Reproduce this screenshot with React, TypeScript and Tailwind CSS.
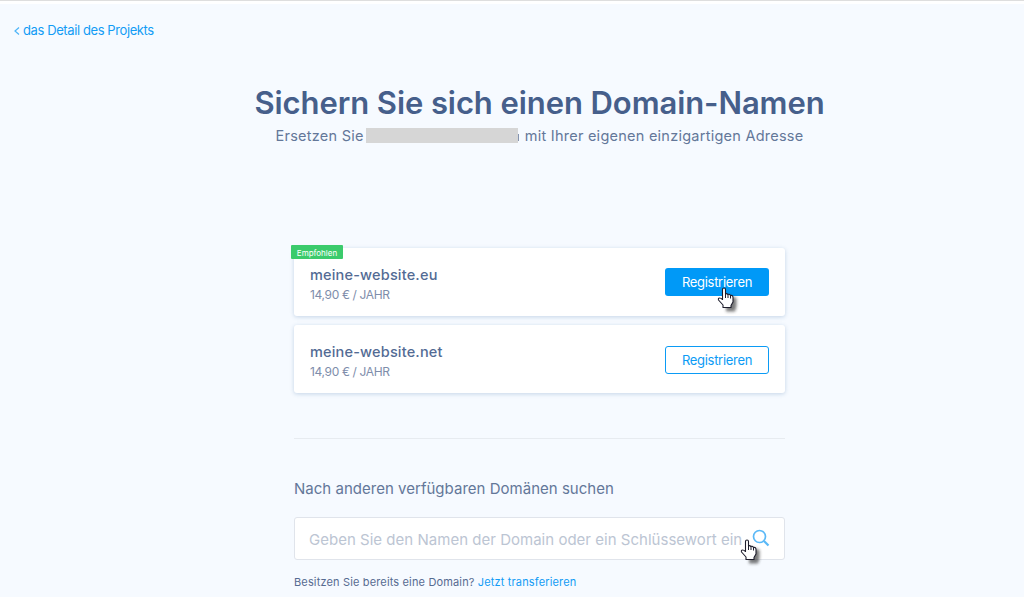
interface IDomain {
    name: string;
    price: string;
    recommended?: boolean;
}

const domains: IDomain[] = [
    { name: "meine-website.eu", price: "14,90 € / JAHR", recommended: true },
    { name: "meine-website.net", price: "14,90 € / JAHR" },
];

function HandCursor({ className }: { className: string }) {
    return (
        <svg viewBox="0 0 26 30" className={`pointer-events-none absolute h-[30px] w-[26px] overflow-visible ${className}`}>
            <defs>
                <filter id="hand-shadow" x="-50%" y="-50%" width="200%" height="200%">
                    <feGaussianBlur stdDeviation="1.7" />
                </filter>
            </defs>
            <path
                d="M10 8L19.500 11V19L18 24.500H9Z"
                fill="#222"
                opacity="0.6"
                filter="url(#hand-shadow)"
            />
            <path
                d="M5.500 12.500V2.500Q5.500 1 7 1T8.500 2.500V7Q9.500 6 11 7.500Q12.500 6.800 13.500 8.500Q16 8 16 10.500V15L14 18.500V20.500H6V18L1.500 13Q1 11 2.500 11T5.500 12.500Z"
                fill="#fff"
                stroke="#1c1c2b"
                strokeWidth="1.100"
                strokeLinejoin="round"
            />
            <path d="M8.500 7v4M11 7.500v3.500M13.500 8.500v3" stroke="#1c1c2b" strokeWidth="1" fill="none" />
        </svg>
    );
}

function DomainCard({ name, price, recommended }: IDomain) {
    return (
        <div className="relative flex h-[68px] items-center justify-between rounded-[3px] bg-white px-4 shadow-[0_1px_4px_rgba(70,120,170,0.28)]">
            {recommended && (
                <span className="absolute -top-[3px] -left-[3px] flex h-[14px] w-[52px] items-center justify-center rounded-[1px] bg-[#3bcb6c] pt-px text-[8px] text-white">
                    Empfohlen
                </span>
            )}
            <div className="pt-1.5 whitespace-nowrap">
                <div className="text-[14.500px] leading-5 font-medium tracking-[0.180px] text-[#536b94]">{name}</div>
                <div className="text-[12px] leading-5 tracking-[-0.350px] text-[#7e8dab]">{price}</div>
            </div>
            <button
                className={
                    recommended
                        ? "relative h-7 w-[104px] rounded-[3px] bg-[#0099f7] pt-px text-[13px] tracking-[-0.300px] text-white"
                        : "mt-0.5 h-7 w-[104px] rounded-[3px] border border-[#0b9bf5] bg-white pt-px text-[13px] tracking-[-0.300px] text-[#0b9bf5]"
                }
            >
                Registrieren
                {recommended && <HandCursor className="top-[19px] left-[52px]" />}
            </button>
        </div>
    );
}

function App() {
    return (
        <div className="h-[597px] overflow-hidden border-t border-[#dedede] bg-[#f6faff] font-['Inter',sans-serif]">
            <div className="h-[3px] bg-white" />
            <a className="mt-4 ml-[14px] flex h-[21px] w-fit items-center text-[13px] tracking-[-0.400px] whitespace-nowrap text-[#129cf5]">
                <svg viewBox="0 0 6 8" className="mr-[3px] h-2 w-[6px] shrink-0" fill="none" stroke="#4db4f8" strokeWidth="1.200">
                    <path d="M5 0.500L1 4l4 3.500" />
                </svg>
                das Detail des Projekts
            </a>

            <div className="mt-[42px] ml-[29px] w-[1021px] text-center whitespace-nowrap">
                <h1 className="text-[31px] leading-10 font-semibold tracking-[-0.080px] text-[#465f8b]">Sichern Sie sich einen Domain-Namen</h1>
                <p className="flex h-6 items-center justify-center pt-px text-[14.500px] tracking-[0.250px] text-[#637799]">
                    Ersetzen Sie
                    <span className="mr-[6px] ml-[2px] flex h-[15px] items-end">
                        <span className="h-[15px] w-[152px] bg-[#d6d6d6]" />
                        <span className="mb-0.5 h-[7px] w-px bg-[#8594b0]" />
                    </span>
                    mit Ihrer eigenen einzigartigen Adresse
                </p>
            </div>

            <div className="mt-[101px] ml-[294px] w-[491px]">
                <div className="flex flex-col gap-[9px]">
                    {domains.map((domain) => (
                        <DomainCard key={domain.name} {...domain} />
                    ))}
                </div>

                <hr className="mt-[45px] border-[#e7ebf0]" />

                <h2 className="mt-[38px] text-[15px] leading-6 tracking-[0.020px] whitespace-nowrap text-[#637799]">
                    Nach anderen verfügbaren Domänen suchen
                </h2>
                <div className="relative mt-4 flex h-[43px] items-center justify-between rounded-[3px] border border-[#e0e4eb] bg-white px-[14px]">
                    <span className="pt-[3px] text-[15px] tracking-[0.020px] whitespace-nowrap text-[#bcc5d3]">
                        Geben Sie den Namen der Domain oder ein Schlüssewort ein
                    </span>
                    <svg viewBox="0 0 18 18" className="mb-0.5 h-[18px] w-[18px] shrink-0" fill="none" stroke="#5bb9f7">
                        <circle cx="7.500" cy="7.500" r="6" strokeWidth="1.700" />
                        <path d="M12 12l4.500 4.500" strokeWidth="2.200" />
                    </svg>
                    <HandCursor className="top-[21px] left-[445px]" />
                </div>
                <p className="mt-3 text-[11px] leading-5 tracking-[0.150px] whitespace-nowrap text-[#566b91]">
                    Besitzen Sie bereits eine Domain? <a className="text-[#129cf5]">Jetzt transferieren</a>
                </p>
            </div>
        </div>
    );
}

export default App;
